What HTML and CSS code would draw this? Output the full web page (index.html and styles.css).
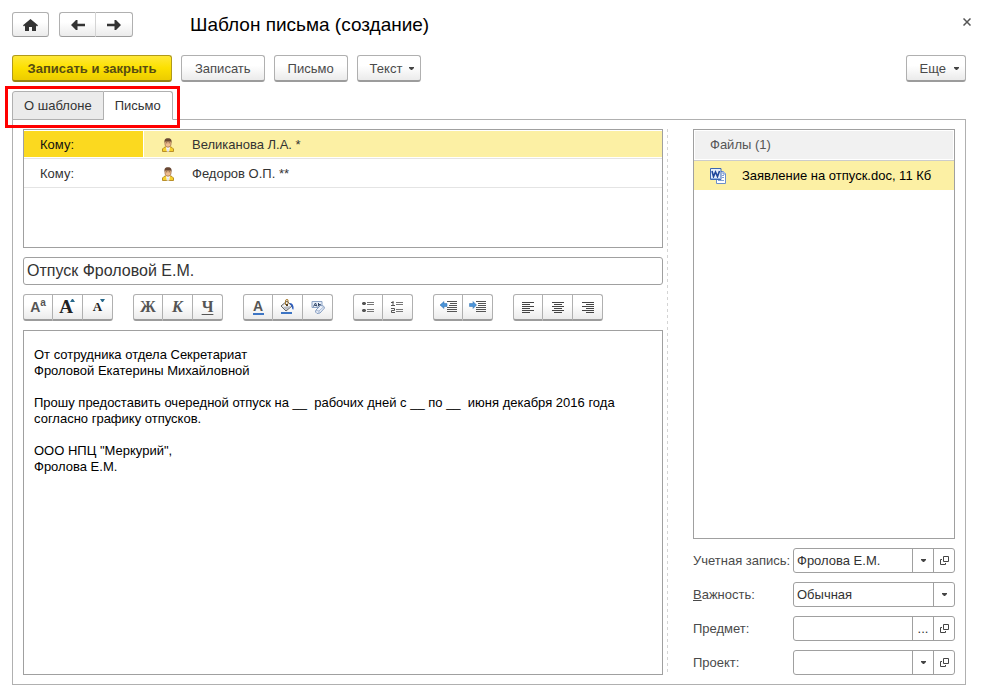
FILE: index.html
```html
<!DOCTYPE html>
<html lang="ru">
<head>
<meta charset="utf-8">
<title>Шаблон письма (создание)</title>
<link rel="stylesheet" href="styles.css">
</head>
<body>
<svg class="defs" aria-hidden="true">
  <symbol id="person" viewBox="0 0 12 14">
    <path d="M.5 13.500V11L2 9.500l2-.8h4l2 .8L11.500 11v2.500z" fill="#f6d02c" stroke="#b98f2a"/>
    <path d="M4 8.500h4l-.8 5H4.800z" fill="#fff"/>
    <path d="M5.500 10.500h1v3h-1z" fill="#c9cfe4"/>
    <path d="M3 3.500h6V6c0 1.800-1.400 3.200-3 3.200S3 7.800 3 6z" fill="#efbd8e" stroke="#a06f48" stroke-width=".8"/>
    <path d="M2.500 5V2.500C2.800.8 4.200.2 6 .2S9.200.8 9.500 2.500V5L8.700 3.200H3.300z" fill="#684733"/>
    <path d="M4.300 4.800h1M6.700 4.800h1" stroke="#5a3d2d"/>
  </symbol>
  <symbol id="open" viewBox="0 0 9 9">
    <path d="M3.500.5h5v5h-5zM2 3.500H.5v5h5V7" fill="none" stroke="#444"/>
  </symbol>
  <symbol id="caret" viewBox="0 0 5 3"><path d="M0 0h5v1L3 3H2L0 1z" fill="#444"/></symbol>
</svg>

<main class="window">
  <header class="titlebar">
    <button class="btn nav" type="button" aria-label="Домой"><svg width="15" height="12" viewBox="0 0 15 12"><path d="M7.500 0 15 6.200l-1 1.200-1-.8V12H9V8H6v4H2V6.600l-1 .8-1-1.200z" fill="#333"/></svg></button>
    <div class="group history">
      <button class="btn nav" type="button" aria-label="Назад"><svg width="14" height="10" viewBox="0 0 14 10"><path d="M0 5 5 0h1.500v3.700H14v2.600H6.500V10H5z" fill="#333"/></svg></button>
      <button class="btn nav" type="button" aria-label="Вперед"><svg width="14" height="10" viewBox="0 0 14 10"><path d="m14 5-5-5H7.500v3.700H0v2.600h7.500V10H9z" fill="#333"/></svg></button>
    </div>
    <h1 class="title">Шаблон письма (создание)</h1>
    <button class="close" type="button" aria-label="Закрыть"><svg width="8" height="8" viewBox="0 0 8 8"><path d="m.5.5 7 7m0-7-7 7" stroke="#555" stroke-width="1.500"/></svg></button>
  </header>

  <div class="commands">
    <button class="btn primary" type="button">Записать и закрыть</button>
    <button class="btn" type="button">Записать</button>
    <button class="btn" type="button">Письмо</button>
    <button class="btn menu" type="button">Текст<svg class="caret"><use href="#caret"/></svg></button>
    <button class="btn menu more" type="button">Еще<svg class="caret"><use href="#caret"/></svg></button>
  </div>

  <div class="tabs" role="tablist">
    <button class="tab" type="button" role="tab" aria-selected="false">О шаблоне</button>
    <button class="tab active" type="button" role="tab" aria-selected="true">Письмо</button>
    <span class="highlight"></span>
  </div>

  <section class="panel">
    <div class="letter">
      <div class="recipients">
        <table>
          <tr class="selected"><td class="kind">Кому:</td><td class="face"><svg width="12" height="14"><use href="#person"/></svg></td><td>Великанова Л.А. *</td></tr>
          <tr><td class="kind">Кому:</td><td class="face"><svg width="12" height="14"><use href="#person"/></svg></td><td>Федоров О.П. **</td></tr>
        </table>
      </div>
      <input class="subject" type="text" aria-label="Тема" value="Отпуск Фроловой Е.М.">
      <div class="format">
        <div class="group">
          <button class="btn" type="button" aria-label="Шрифт"><span class="font-pick">A<sup>a</sup></span></button>
          <button class="btn" type="button" aria-label="Увеличить шрифт"><span class="font-up">A</span><svg class="tick" width="5" height="3" viewBox="0 0 5 3"><path d="M2 0h1l2 3H0z" fill="#27698c"/></svg></button>
          <button class="btn" type="button" aria-label="Уменьшить шрифт"><span class="font-down">A</span><svg class="tick" width="5" height="3" viewBox="0 0 5 3"><path d="M0 0h5L3 3H2z" fill="#27698c"/></svg></button>
        </div>
        <div class="group">
          <button class="btn glyph" type="button">Ж</button>
          <button class="btn glyph italic" type="button">К</button>
          <button class="btn glyph under" type="button">Ч</button>
        </div>
        <div class="group">
          <button class="btn" type="button" aria-label="Цвет текста"><span class="font-color">A</span></button>
          <button class="btn" type="button" aria-label="Цвет фона"><svg width="15" height="16" viewBox="0 0 15 16"><path d="M1 7 7 2l5 5-6 5z" fill="#e4e6ea" stroke="#666"/><path d="m3 7.500 4-3.500 3.500 3.500z" fill="#fff"/><path d="m3 8 3 3 5-4z" fill="#b9bdc5"/><path d="M5.500 6V2Q5.500.5 7 .5T8 2v3" fill="none" stroke="#a77b2f"/><path d="M6 5h2v2H6z" fill="#553f22"/><path d="M10 4q4 0 3.500 6.500Q12.500 11 12 9 12 6 9.500 5z" fill="#2e5fc0"/><path d="M1 13h11v2H1z" fill="#3d75c4"/></svg></button>
          <button class="btn" type="button" aria-label="Очистить оформление"><svg width="16" height="15" viewBox="0 0 16 15"><path d="M2 1.500h10v6H2z" fill="#e5edf8" stroke="#8ca3c4"/><path d="M3.500 6.500 5.500 3l1.500 3.500M4.500 5.500h2" fill="none" stroke="#34496b"/><path d="M8.500 6V3m0 1.500h2V6h-2" fill="none" stroke="#34496b"/><path d="m6 10 4.500-4.500 3 .5 1 2-4.500 5-3 .5-1.500-1.500z" fill="#eef3fb" stroke="#839bbf"/><path d="m6 10.500 3 .5 5-4.500M9 11v2" fill="none" stroke="#a5b7d3"/></svg></button>
        </div>
        <div class="group">
          <button class="btn" type="button" aria-label="Маркированный список"><svg width="13" height="12" viewBox="0 0 13 12"><path d="M1 1h2l1 1v1L3 4H1L0 3V2zM1 8h2l1 1v1l-1 1H1l-1-1V9z" fill="#555"/><path d="M5 1.500h7M5 3.500h7M5 8.500h7M5 10.500h7" stroke="#777"/></svg></button>
          <button class="btn" type="button" aria-label="Нумерованный список"><svg width="13" height="12" viewBox="0 0 13 12"><path d="M0 1.500h2.500M2 0v5M0 4.500h4M0 7.500h3.500v2h-3v2H4" fill="none" stroke="#555"/><path d="M5 1.500h7M5 3.500h7M5 8.500h7M5 10.500h7" stroke="#777"/></svg></button>
        </div>
        <div class="group">
          <button class="btn" type="button" aria-label="Уменьшить отступ"><svg width="17" height="12" viewBox="0 0 17 12"><path d="M7 .5h10M10 2.500h7M9 4.500h8M7 6.500h10M7 8.500h10M7 10.500h10" stroke="#555"/><path d="M0 4 4 .5v2h3v3H4v2z" fill="#4c94d8" stroke="#2d6fae" stroke-width=".5"/></svg></button>
          <button class="btn" type="button" aria-label="Увеличить отступ"><svg width="17" height="12" viewBox="0 0 17 12"><path d="M7 .5h10M9 2.500h8M9 4.500h8M7 6.500h10M7 8.500h10M7 10.500h10" stroke="#555"/><path d="M7.500 4 4 .5v2H.5v3H4v2z" fill="#4c94d8" stroke="#2d6fae" stroke-width=".5"/></svg></button>
        </div>
        <div class="group">
          <button class="btn" type="button" aria-label="По левому краю"><svg width="12" height="11" viewBox="0 0 12 11"><path d="M0 .5h12M0 2.500h8M0 4.500h12M0 6.500h8M0 8.500h12M0 10.500h8" stroke="#444"/></svg></button>
          <button class="btn" type="button" aria-label="По центру"><svg width="12" height="11" viewBox="0 0 12 11"><path d="M0 .5h12M2 2.500h8M0 4.500h12M2 6.500h8M0 8.500h12M2 10.500h8" stroke="#444"/></svg></button>
          <button class="btn" type="button" aria-label="По правому краю"><svg width="12" height="11" viewBox="0 0 12 11"><path d="M0 .5h12M4 2.500h8M0 4.500h12M4 6.500h8M0 8.500h12M4 10.500h8" stroke="#444"/></svg></button>
        </div>
      </div>
      <textarea class="editor" aria-label="Текст письма" spellcheck="false">От сотрудника отдела Секретариат
Фроловой Екатерины Михайловной

Прошу предоставить очередной отпуск на __  рабочих дней с __ по __  июня декабря 2016 года
согласно графику отпусков.

ООО НПЦ "Меркурий",
Фролова Е.М.</textarea>
    </div>

    <div class="splitter"></div>

    <aside class="side">
      <div class="files">
        <h2>Файлы (1)</h2>
        <ul>
          <li><svg width="16" height="16" viewBox="0 0 16 16"><path d="M8.500 3.500h5l2 2v10h-9v-12z" fill="#fff" stroke="#6c8fc9"/><path d="M13 3v3h3" fill="#dbe7f8" stroke="#6c8fc9"/><path d="M12 7.500h2M12 9.500h2M8 12.500h6" stroke="#7fa0d4"/><path d="M.5.500h10.500v11H.5z" fill="#e6effb" stroke="#3c66b0"/><path d="m2 3 1.500 5.500L5.500 4l2 4.500L9.500 3" fill="none" stroke="#1f479b" stroke-width="1.600"/><path d="M1 10.500h10" stroke="#8fb0e2"/></svg><span>Заявление на отпуск.doc, 11 Кб</span></li>
        </ul>
      </div>
      <div class="row">
        <label for="account">Учетная запись:</label>
        <div class="field"><input id="account" type="text" value="Фролова Е.М."><button type="button" aria-label="Выбрать"><svg class="caret"><use href="#caret"/></svg></button><button type="button" aria-label="Открыть"><svg class="open"><use href="#open"/></svg></button></div>
      </div>
      <div class="row">
        <label for="priority"><u>В</u>ажность:</label>
        <div class="field"><select id="priority"><option>Обычная</option></select><span class="drop"><svg class="caret"><use href="#caret"/></svg></span></div>
      </div>
      <div class="row">
        <label for="subject-ref">Предмет:</label>
        <div class="field"><input id="subject-ref" type="text"><button type="button" aria-label="Выбрать предмет">...</button><button type="button" aria-label="Открыть"><svg class="open"><use href="#open"/></svg></button></div>
      </div>
      <div class="row">
        <label for="project">Проект:</label>
        <div class="field"><input id="project" type="text"><button type="button" aria-label="Выбрать"><svg class="caret"><use href="#caret"/></svg></button><button type="button" aria-label="Открыть"><svg class="open"><use href="#open"/></svg></button></div>
      </div>
    </aside>
  </section>
</main>
</body>
</html>
```
FILE: styles.css
```css
* { box-sizing: border-box; }

body {
  margin: 0;
  background: #fff;
  color: #333;
  font: 13px/16px "Liberation Sans", Arial, sans-serif;
}

button, input, select, textarea {
  margin: 0;
  color: inherit;
  font: inherit;
}

.defs { position: absolute; width: 0; height: 0; }

.window {
  display: flex;
  flex-direction: column;
  min-height: 100vh;
  padding: 12px 19px 12px 12px;
}

/* Buttons */

.btn {
  display: flex;
  align-items: center;
  justify-content: center;
  height: 27px;
  padding: 1px 13px 0;
  border: 1px solid #b0b0b0;
  border-bottom: 2px solid #9c9c9c;
  border-radius: 3px;
  background: linear-gradient(#fff 40%, #ebebeb);
  color: #4a4a4a;
}

.primary {
  min-width: 160px;
  border-color: #b09a1a;
  border-bottom-color: #978310;
  background: linear-gradient(#ffe838, #fce000 50%, #eccc00);
  color: #574c12;
  font-weight: bold;
}

.caret { width: 5px; height: 3px; }

.menu { gap: 7px; padding: 1px 6px 0 12px; }
.more { gap: 8px; margin-left: auto; padding-left: 13px; }

.group { display: flex; }
.group .btn + .btn { border-left: 0; }
.group .btn:not(:first-child) { border-top-left-radius: 0; border-bottom-left-radius: 0; }
.group .btn:not(:last-child) { border-top-right-radius: 0; border-bottom-right-radius: 0; }

/* Title bar */

.titlebar { display: flex; align-items: center; height: 25px; }

.nav {
  width: 37px;
  height: 25px;
  padding: 0;
  border-bottom-width: 1px;
}

.history { margin-left: 10px; }
.history .btn:first-child { border-right-color: #d4d4d4; }

.title {
  margin: 0 0 0 57px;
  color: #000;
  font-size: 19px;
  font-weight: normal;
  line-height: 25px;
}

.close {
  display: flex;
  align-self: flex-start;
  margin-left: auto;
  padding: 6px 0;
  border: 0;
  background: none;
}

.close svg { margin-right: -5px; }

.commands { display: flex; gap: 9px; margin-top: 18px; }

/* Tabs */

.tabs { position: relative; display: flex; align-self: flex-start; margin-top: 9px; }

.tab {
  height: 29px;
  padding: 0 11px;
  border: 1px solid #b0b0b0;
  border-radius: 3px 0 0 0;
  background: #ebebeb;
}

.tab.active {
  border-left: 0;
  border-bottom-color: #fff;
  border-radius: 0 3px 0 0;
  background: #fff;
}

.highlight {
  position: absolute;
  inset: -5px -7px -8px -7px;
  border: 3px solid #f00;
  pointer-events: none;
}

/* Main panel */

.panel {
  display: flex;
  flex: 1;
  margin-top: -1px;
  padding: 9px 10px;
  border: 1px solid #b0b0b0;
}

.letter { display: flex; flex: 1; flex-direction: column; gap: 9px; min-width: 0; }

.recipients { height: 119px; border: 1px solid #a0a0a0; }
.recipients table { width: 100%; border-spacing: 0; }

.recipients td {
  height: 29px;
  padding: 1px 0 0;
  border-bottom: 1px solid #e4e4e4;
  box-shadow: inset 0 1px #fff, inset 0 -1px #fff;
}

.recipients .kind {
  width: 120px;
  padding-left: 16px;
  box-shadow: inset 0 1px #fff, inset -1px -1px #fff;
}

.recipients .face { width: 48px; padding-left: 18px; }
.recipients svg { display: block; }
.selected { background: #fcf0a4; }
.selected .kind { background: #fbd91f; color: #111; }

.subject {
  width: 100%;
  height: 28px;
  padding: 0 3px;
  border: 1px solid #a0a0a0;
  border-radius: 3px;
  font-size: 16px;
}

.format { display: flex; gap: 20px; }
.format .btn { position: relative; width: 30px; padding: 0; }

.font-pick { font-size: 14px; font-weight: bold; color: #555; }
.font-pick sup { font-size: 10px; line-height: 8px; }
.font-up, .font-down, .glyph { font-family: "Liberation Serif", "Times New Roman", serif; font-weight: bold; }
.font-up { padding-right: 3px; color: #222; font-size: 19px; }
.font-down { color: #222; font-size: 13px; }
.tick { position: absolute; top: 4px; right: 7px; }
.glyph { color: #555; font-size: 16px; }
.italic { font-style: italic; }
.under { text-decoration: underline; text-underline-offset: 2px; }

.font-color {
  width: 11px;
  border-bottom: 2px solid #3d75c4;
  color: #555;
  font-size: 14px;
  font-weight: bold;
  line-height: 13px;
}

.editor {
  flex: 1;
  width: 100%;
  padding: 16px 10px;
  border: 1px solid #a0a0a0;
  border-radius: 0;
  outline: 0;
  color: #000;
  resize: none;
}

.splitter {
  width: 1px;
  margin: 0 25px 0 4px;
  background: repeating-linear-gradient(#d4d4d4 0 3px, transparent 3px 6px);
}

/* Attachments and properties */

.side { display: flex; flex: 0 0 262px; flex-direction: column; gap: 9px; min-width: 0; }
.files { flex: 1; border: 1px solid #a0a0a0; }

.files h2 {
  margin: 0;
  padding: 7px 16px;
  border-bottom: 1px solid #ccc;
  background: #f1f1f1;
  box-shadow: inset 0 0 0 1px #fff;
  color: #555;
  font-size: 13px;
  font-weight: normal;
}

.files ul { margin: 0; padding: 0; list-style: none; }

.files li {
  display: flex;
  align-items: center;
  gap: 16px;
  height: 29px;
  padding: 0 16px;
  background: #fcf0a4;
  color: #000;
}

.row { display: flex; align-items: center; }
.row label { flex: 0 0 100px; color: #4a4a4a; white-space: nowrap; }

.field {
  display: flex;
  flex: 1;
  height: 25px;
  min-width: 0;
  border: 1px solid #a0a0a0;
  border-radius: 3px;
}

.field input, .field select {
  flex: 1;
  width: 0;
  min-width: 0;
  padding: 0 3px;
  border: 0;
  outline: 0;
  background: none;
  appearance: none;
}

.field button, .drop {
  display: flex;
  align-items: center;
  justify-content: center;
  width: 21px;
  padding: 0;
  border: 0;
  border-left: 1px solid #a0a0a0;
  background: none;
}

.open { width: 9px; height: 9px; }
```
